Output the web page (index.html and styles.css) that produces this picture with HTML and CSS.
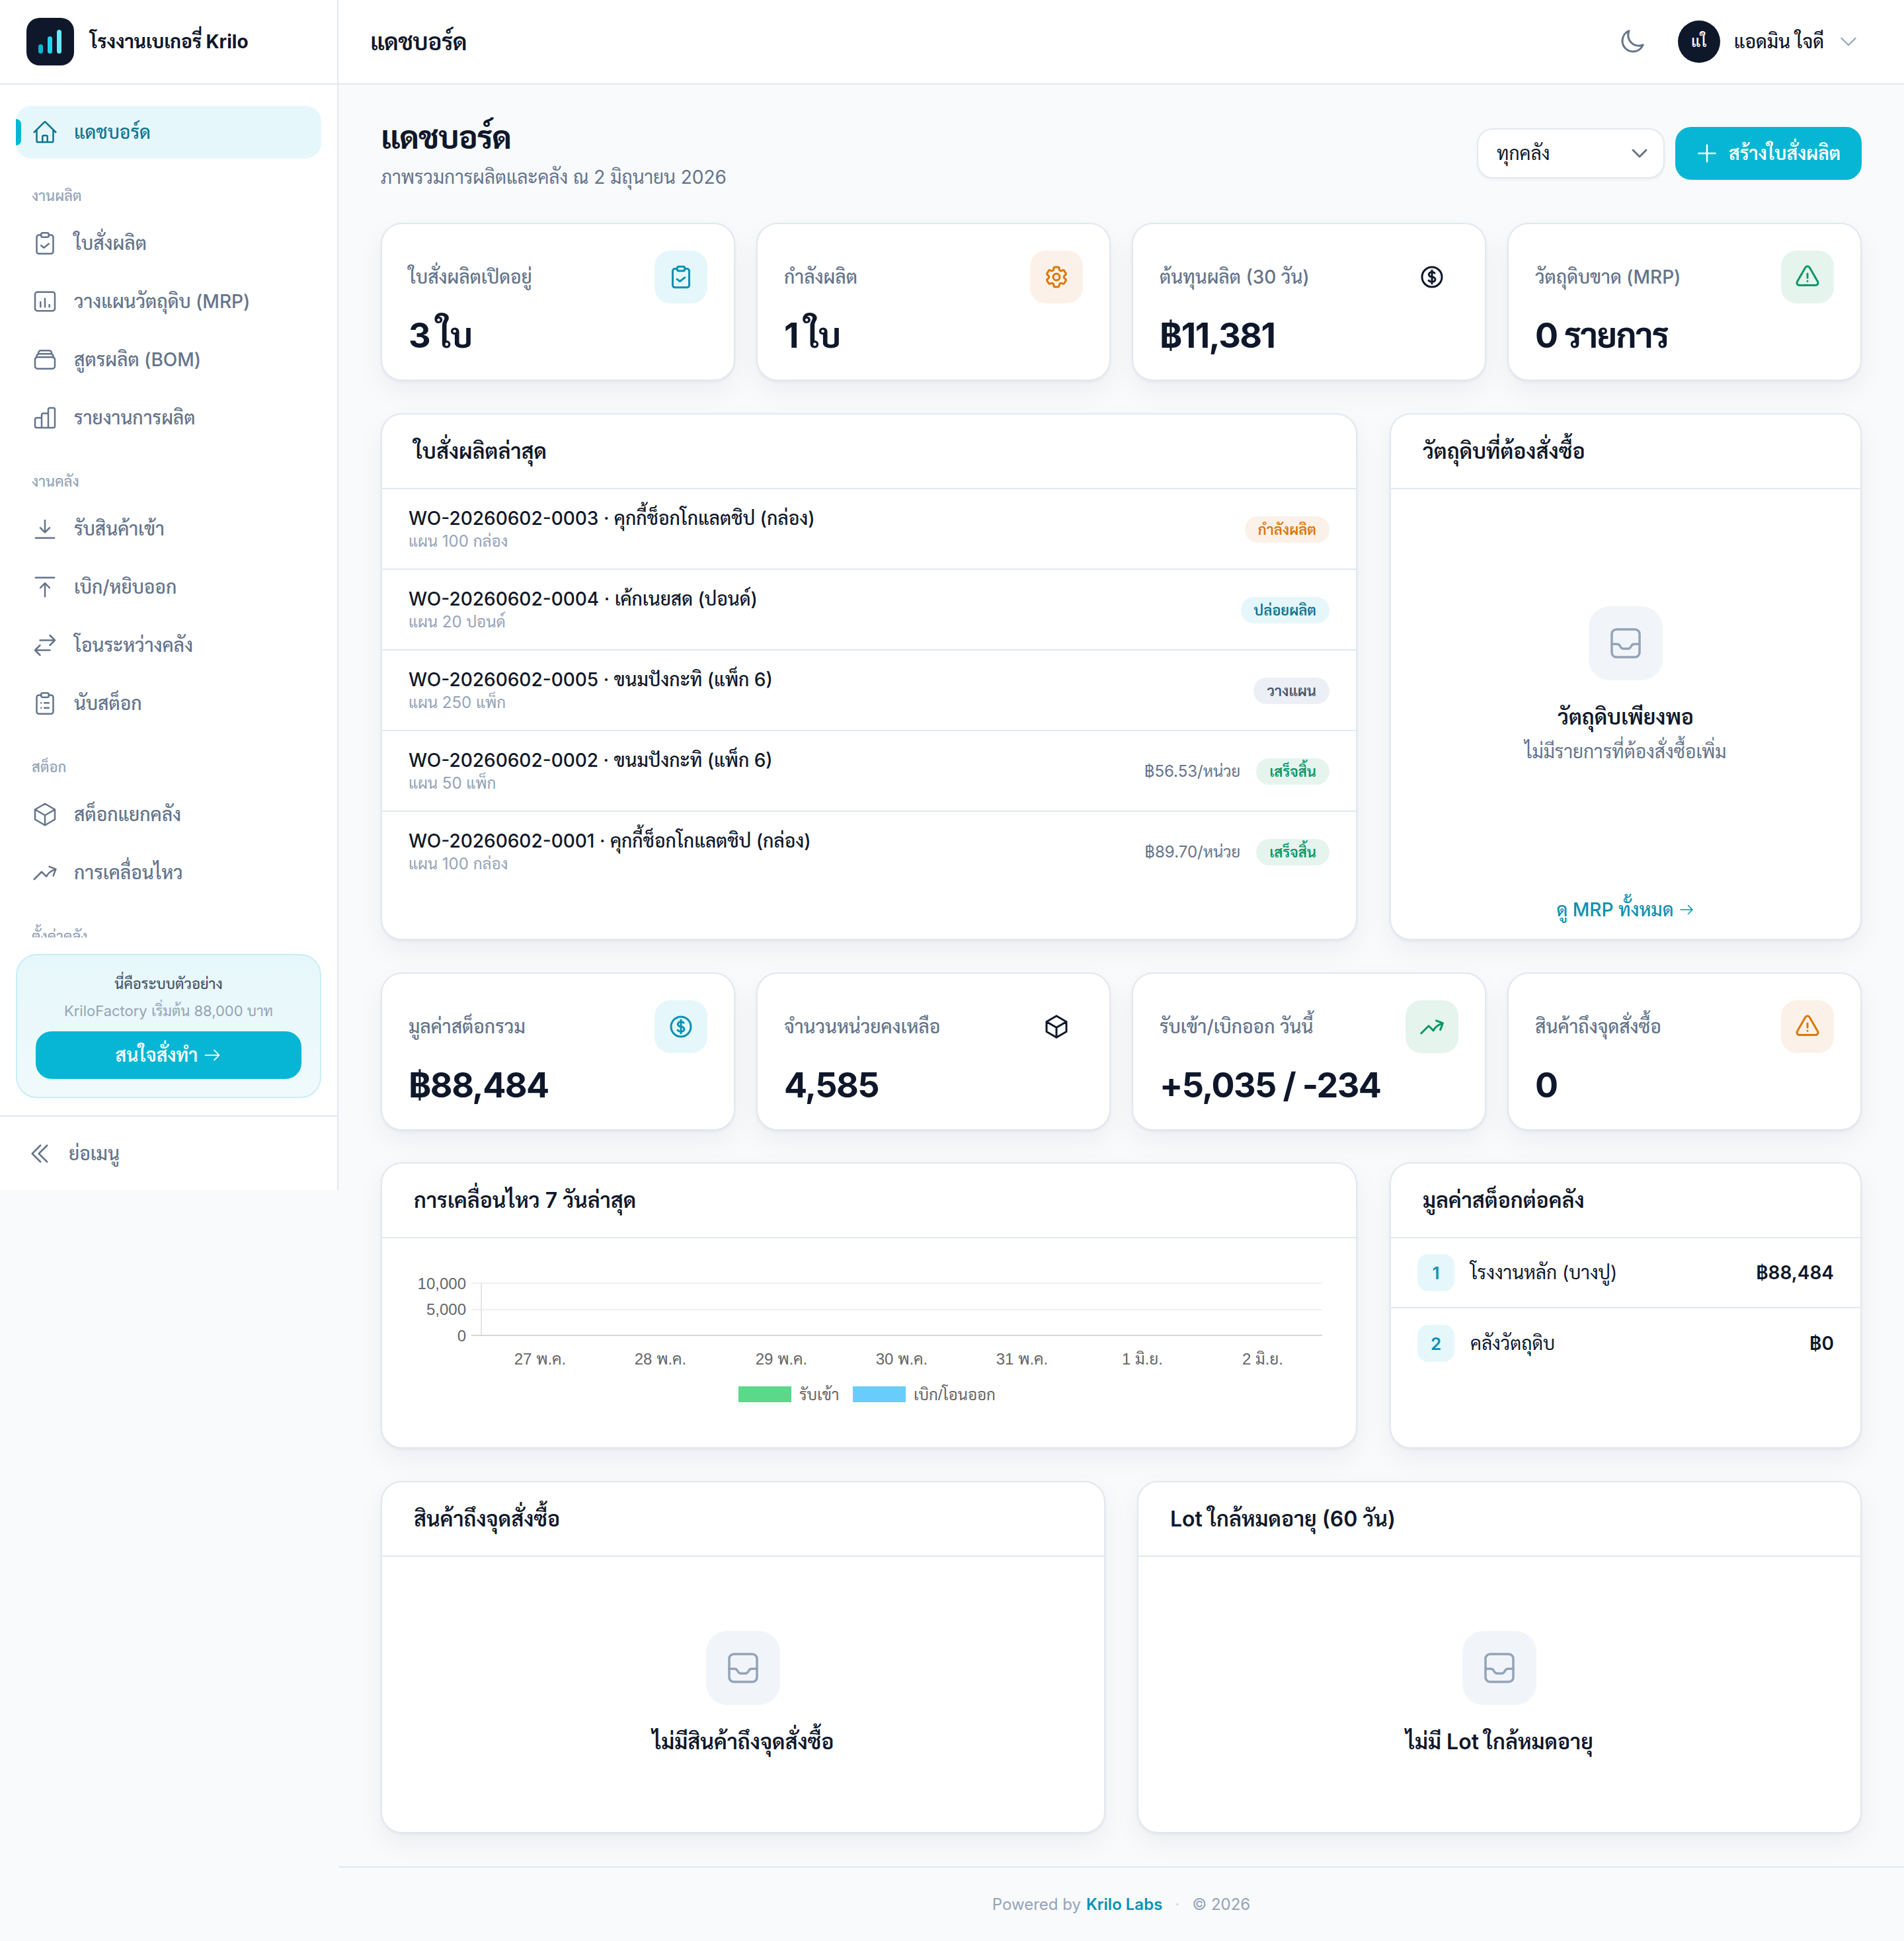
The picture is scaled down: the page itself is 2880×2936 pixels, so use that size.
FILE: index.html
```html
<!DOCTYPE html>
<html lang="th">
<head>
<meta charset="utf-8">
<title>แดชบอร์ด</title>
<link rel="stylesheet" href="styles.css">
</head>
<body>

<svg class="sprite" width="0" height="0">
	<symbol id="i-home" viewBox="0 0 24 24"><path d="m2.25 12 8.954-8.955c.44-.439 1.152-.439 1.591 0L21.75 12M4.5 9.75v10.125c0 .621.504 1.125 1.125 1.125H9.75v-4.875c0-.621.504-1.125 1.125-1.125h2.25c.621 0 1.125.504 1.125 1.125V21h4.125c.621 0 1.125-.504 1.125-1.125V9.75M8.25 21h8.25"/></symbol>
	<symbol id="i-check" viewBox="0 0 24 24"><rect x="8.5" y="2.5" width="7" height="4" rx="1.5"/><path d="M15.5 4.5h2A2 2 0 0 1 19.5 6.500v13a2 2 0 0 1-2 2h-11a2 2 0 0 1-2-2v-13a2 2 0 0 1 2-2h2"/><path d="m8.500 14 2.500 2 4.500-3.500"/></symbol>
	<symbol id="i-mrp" viewBox="0 0 24 24"><rect x="3" y="3.500" width="18" height="17" rx="2"/><path d="M8 12.500v4.500M12 9.500v7.500M16 15v2"/></symbol>
	<symbol id="i-stack" viewBox="0 0 24 24"><path d="M6 6.878V6a2.25 2.25 0 0 1 2.25-2.25h7.5A2.25 2.25 0 0 1 18 6v.878m-12 0c.235-.083.487-.128.75-.128h10.5c.263 0 .515.045.75.128m-12 0A2.25 2.25 0 0 0 4.500 9v.878m13.5-3A2.25 2.25 0 0 1 19.500 9v.878m0 0a2.246 2.246 0 0 0-.75-.128H5.250c-.263 0-.515.045-.75.128m15 0A2.25 2.25 0 0 1 21 12v6a2.25 2.25 0 0 1-2.25 2.25H5.250A2.25 2.25 0 0 1 3 18v-6c0-.98.626-1.813 1.500-2.122"/></symbol>
	<symbol id="i-bars" viewBox="0 0 24 24"><path d="M3 13.500A1.500 1.500 0 0 1 4.500 12H9v9H4.500A1.500 1.500 0 0 1 3 19.500ZM9 21V9.500A1.500 1.500 0 0 1 10.500 8H15v13ZM15 21V4.500A1.500 1.500 0 0 1 16.500 3h3A1.500 1.500 0 0 1 21 4.500v15a1.500 1.500 0 0 1-1.500 1.500Z"/></symbol>
	<symbol id="i-in" viewBox="0 0 24 24"><path d="M12 4.200v11M7.800 11 12 15.200 16.200 11M3.500 20.300h17"/></symbol>
	<symbol id="i-out" viewBox="0 0 24 24"><path d="M3.500 3.500h17M12 20.500v-12M7.800 12.700 12 8.500l4.200 4.200"/></symbol>
	<symbol id="i-swap" viewBox="0 0 24 24"><path d="M7.500 21 3 16.500m0 0L7.500 12M3 16.500h13.500m0-13.500L21 7.500m0 0L16.500 12M21 7.500H7.500"/></symbol>
	<symbol id="i-list" viewBox="0 0 24 24"><rect x="8.500" y="2.500" width="7" height="4" rx="1.500"/><path d="M15.500 4.500h2a2 2 0 0 1 2 2v13a2 2 0 0 1-2 2h-11a2 2 0 0 1-2-2v-13a2 2 0 0 1 2-2h2"/><path d="M11.500 11.500h4M11.500 16h4M8.500 11.500h.01M8.500 16h.01"/></symbol>
	<symbol id="i-cube" viewBox="0 0 24 24"><path d="m21 7.500-9-5.250L3 7.500m18 0-9 5.250m9-5.250v9l-9 5.250M3 7.500l9 5.250M3 7.500v9l9 5.250m0-9v9"/></symbol>
	<symbol id="i-trend" viewBox="0 0 24 24"><path d="M2.250 18 9 11.250l4.306 4.306a11.950 11.950 0 0 1 5.814-5.518l2.740-1.220m0 0-5.940-2.281m5.940 2.280-2.280 5.941"/></symbol>
	<symbol id="i-double" viewBox="0 0 24 24"><path d="m18.750 4.500-7.500 7.500 7.500 7.500m-6-15L5.250 12l7.500 7.500"/></symbol>
	<symbol id="i-moon" viewBox="0 0 24 24"><path d="M21.752 15.002A9.720 9.720 0 0 1 18 15.750c-5.385 0-9.750-4.365-9.750-9.750 0-1.330.266-2.597.748-3.752A9.753 9.753 0 0 0 3 11.250C3 16.635 7.365 21 12.750 21a9.753 9.753 0 0 0 9.002-5.998Z"/></symbol>
	<symbol id="i-chevron" viewBox="0 0 24 24"><path d="m19.500 8.250-7.500 7.500-7.500-7.500"/></symbol>
	<symbol id="i-plus" viewBox="0 0 24 24"><path d="M12 4.500v15m7.500-7.500h-15"/></symbol>
	<symbol id="i-cog" viewBox="0 0 24 24"><path d="M9.594 3.940c.09-.542.56-.94 1.110-.94h2.593c.55 0 1.020.398 1.110.94l.213 1.281c.063.374.313.686.645.870.074.04.147.083.22.127.325.196.72.257 1.075.124l1.217-.456a1.125 1.125 0 0 1 1.370.49l1.296 2.247a1.125 1.125 0 0 1-.26 1.431l-1.003.827c-.293.241-.438.613-.43.992a7.723 7.723 0 0 1 0 .255c-.008.378.137.75.43.991l1.004.827c.424.35.534.955.26 1.430l-1.298 2.247a1.125 1.125 0 0 1-1.369.491l-1.217-.456c-.355-.133-.75-.072-1.076.124a6.470 6.470 0 0 1-.22.128c-.331.183-.581.495-.644.869l-.213 1.281c-.09.543-.56.94-1.110.94h-2.594c-.55 0-1.019-.398-1.110-.94l-.213-1.281c-.062-.374-.312-.686-.644-.87a6.520 6.520 0 0 1-.22-.127c-.325-.196-.72-.257-1.076-.124l-1.217.456a1.125 1.125 0 0 1-1.369-.49l-1.297-2.247a1.125 1.125 0 0 1 .26-1.431l1.004-.827c.292-.24.437-.613.43-.991a6.932 6.932 0 0 1 0-.255c.007-.38-.138-.751-.43-.992l-1.004-.827a1.125 1.125 0 0 1-.26-1.430l1.297-2.247a1.125 1.125 0 0 1 1.370-.491l1.216.456c.356.133.751.072 1.076-.124.072-.044.146-.086.22-.128.332-.183.582-.495.644-.869l.214-1.280Z"/><path d="M15 12a3 3 0 1 1-6 0 3 3 0 0 1 6 0Z"/></symbol>
	<symbol id="i-dollar" viewBox="0 0 24 24"><path d="M12 6v12m-3-2.818.879.659c1.171.879 3.070.879 4.242 0 1.172-.879 1.172-2.303 0-3.182C13.536 12.219 12.768 12 12 12c-.725 0-1.450-.22-2.003-.659-1.106-.879-1.106-2.303 0-3.182s2.900-.879 4.006 0l.415.33M21 12a9 9 0 1 1-18 0 9 9 0 0 1 18 0Z"/></symbol>
	<symbol id="i-warn" viewBox="0 0 24 24"><path d="M12 9v3.750m-9.303 3.376c-.866 1.500.217 3.374 1.948 3.374h14.710c1.730 0 2.813-1.874 1.948-3.374L13.949 3.378c-.866-1.500-3.032-1.500-3.898 0L2.697 16.126ZM12 15.750h.007v.008H12v-.008Z"/></symbol>
	<symbol id="i-tray" viewBox="0 0 24 24"><rect x="3" y="3" width="18" height="18" rx="3"/><path d="M3 12.500h3.500c1 0 1.500.5 2 1.500s1 1.500 2 1.500h3c1 0 1.500-.5 2-1.500s1-1.500 2-1.500H21"/></symbol>
	<symbol id="i-arrow" viewBox="0 0 24 24"><path d="M3 12h18m-6.500-6.500L21 12l-6.500 6.500"/></symbol>
</svg>

<div class="app">
	<aside class="sidebar">
		<div class="brand">
			<div class="brand-logo">
				<svg width="72" height="72" viewBox="0 0 72 72">
					<rect x="18" y="40" width="7" height="14" rx="3.500" fill="#06b6d4"/>
					<rect x="32" y="28" width="7" height="26" rx="3.500" fill="#22d3ee"/>
					<rect x="46" y="18" width="7" height="36" rx="3.500" fill="#67e8f9"/>
				</svg>
			</div>
			<span class="brand-name">โรงงานเบเกอรี่ Krilo</span>
		</div>

		<nav class="nav">
			<a class="nav-item active"><svg class="icon"><use href="#i-home"/></svg>แดชบอร์ด</a>

			<div class="nav-label">งานผลิต</div>
			<a class="nav-item"><svg class="icon"><use href="#i-check"/></svg>ใบสั่งผลิต</a>
			<a class="nav-item"><svg class="icon"><use href="#i-mrp"/></svg>วางแผนวัตถุดิบ (MRP)</a>
			<a class="nav-item"><svg class="icon"><use href="#i-stack"/></svg>สูตรผลิต (BOM)</a>
			<a class="nav-item"><svg class="icon"><use href="#i-bars"/></svg>รายงานการผลิต</a>

			<div class="nav-label">งานคลัง</div>
			<a class="nav-item"><svg class="icon"><use href="#i-in"/></svg>รับสินค้าเข้า</a>
			<a class="nav-item"><svg class="icon"><use href="#i-out"/></svg>เบิก/หยิบออก</a>
			<a class="nav-item"><svg class="icon"><use href="#i-swap"/></svg>โอนระหว่างคลัง</a>
			<a class="nav-item"><svg class="icon"><use href="#i-list"/></svg>นับสต็อก</a>

			<div class="nav-label">สต็อก</div>
			<a class="nav-item"><svg class="icon"><use href="#i-cube"/></svg>สต็อกแยกคลัง</a>
			<a class="nav-item"><svg class="icon"><use href="#i-trend"/></svg>การเคลื่อนไหว</a>

			<div class="nav-label">ตั้งค่าคลัง</div>
		</nav>

		<div class="promo">
			<div class="promo-title">นี่คือระบบตัวอย่าง</div>
			<div class="promo-sub">KriloFactory เริ่มต้น 88,000 บาท</div>
			<a class="promo-btn">สนใจสั่งทำ <svg class="icon-sm"><use href="#i-arrow"/></svg></a>
		</div>

		<a class="collapse"><svg class="icon"><use href="#i-double"/></svg>ย่อเมนู</a>
	</aside>

	<div class="main">
		<header class="topbar">
			<div class="topbar-title">แดชบอร์ด</div>
			<svg class="icon moon"><use href="#i-moon"/></svg>
			<div class="avatar">แใ</div>
			<div class="user-name">แอดมิน ใจดี</div>
			<svg class="user-chevron"><use href="#i-chevron"/></svg>
		</header>

		<main class="content">
			<div class="page-head">
				<div>
					<h1>แดชบอร์ด</h1>
					<p>ภาพรวมการผลิตและคลัง ณ 2 มิถุนายน 2026</p>
				</div>
				<div class="page-actions">
					<div class="select">ทุกคลัง<svg><use href="#i-chevron"/></svg></div>
					<a class="btn-primary"><svg class="icon"><use href="#i-plus"/></svg>สร้างใบสั่งผลิต</a>
				</div>
			</div>

			<section class="stats">
				<div class="stat">
					<div class="stat-top"><span>ใบสั่งผลิตเปิดอยู่</span><div class="chip cyan"><svg class="icon"><use href="#i-check"/></svg></div></div>
					<div class="stat-value">3 ใบ</div>
				</div>
				<div class="stat">
					<div class="stat-top"><span>กำลังผลิต</span><div class="chip orange"><svg class="icon"><use href="#i-cog"/></svg></div></div>
					<div class="stat-value">1 ใบ</div>
				</div>
				<div class="stat">
					<div class="stat-top"><span>ต้นทุนผลิต (30 วัน)</span><div class="chip plain"><svg class="icon"><use href="#i-dollar"/></svg></div></div>
					<div class="stat-value">฿11,381</div>
				</div>
				<div class="stat">
					<div class="stat-top"><span>วัตถุดิบขาด (MRP)</span><div class="chip green"><svg class="icon"><use href="#i-warn"/></svg></div></div>
					<div class="stat-value">0 รายการ</div>
				</div>
			</section>

			<section class="row-8-4 row-orders">
				<div class="panel">
					<div class="panel-head">ใบสั่งผลิตล่าสุด</div>
					<div class="order">
						<div class="order-text"><div class="order-title">WO-20260602-0003 · คุกกี้ช็อกโกแลตชิป (กล่อง)</div><div class="order-sub">แผน 100 กล่อง</div></div>
						<span class="badge b-orange">กำลังผลิต</span>
					</div>
					<div class="order">
						<div class="order-text"><div class="order-title">WO-20260602-0004 · เค้กเนยสด (ปอนด์)</div><div class="order-sub">แผน 20 ปอนด์</div></div>
						<span class="badge b-cyan">ปล่อยผลิต</span>
					</div>
					<div class="order">
						<div class="order-text"><div class="order-title">WO-20260602-0005 · ขนมปังกะทิ (แพ็ก 6)</div><div class="order-sub">แผน 250 แพ็ก</div></div>
						<span class="badge b-gray">วางแผน</span>
					</div>
					<div class="order">
						<div class="order-text"><div class="order-title">WO-20260602-0002 · ขนมปังกะทิ (แพ็ก 6)</div><div class="order-sub">แผน 50 แพ็ก</div></div>
						<span class="order-cost">฿56.53/หน่วย</span>
						<span class="badge b-green">เสร็จสิ้น</span>
					</div>
					<div class="order">
						<div class="order-text"><div class="order-title">WO-20260602-0001 · คุกกี้ช็อกโกแลตชิป (กล่อง)</div><div class="order-sub">แผน 100 กล่อง</div></div>
						<span class="order-cost">฿89.70/หน่วย</span>
						<span class="badge b-green">เสร็จสิ้น</span>
					</div>
				</div>

				<div class="panel">
					<div class="panel-head">วัตถุดิบที่ต้องสั่งซื้อ</div>
					<div class="empty empty-mrp">
						<div class="empty-icon"><svg><use href="#i-tray"/></svg></div>
						<div class="empty-title">วัตถุดิบเพียงพอ</div>
						<div class="empty-sub">ไม่มีรายการที่ต้องสั่งซื้อเพิ่ม</div>
					</div>
					<a class="panel-link">ดู MRP ทั้งหมด <svg class="icon-sm"><use href="#i-arrow"/></svg></a>
				</div>
			</section>

			<section class="stats stats-low">
				<div class="stat">
					<div class="stat-top"><span>มูลค่าสต็อกรวม</span><div class="chip cyan"><svg class="icon"><use href="#i-dollar"/></svg></div></div>
					<div class="stat-value">฿88,484</div>
				</div>
				<div class="stat">
					<div class="stat-top"><span>จำนวนหน่วยคงเหลือ</span><div class="chip plain"><svg class="icon"><use href="#i-cube"/></svg></div></div>
					<div class="stat-value">4,585</div>
				</div>
				<div class="stat">
					<div class="stat-top"><span>รับเข้า/เบิกออก วันนี้</span><div class="chip green"><svg class="icon"><use href="#i-trend"/></svg></div></div>
					<div class="stat-value">+5,035 / -234</div>
				</div>
				<div class="stat">
					<div class="stat-top"><span>สินค้าถึงจุดสั่งซื้อ</span><div class="chip orange"><svg class="icon"><use href="#i-warn"/></svg></div></div>
					<div class="stat-value">0</div>
				</div>
			</section>

			<section class="row-8-4 row-chart">
				<div class="panel">
					<div class="panel-head">การเคลื่อนไหว 7 วันล่าสุด</div>
					<svg class="chart" viewBox="0 0 1473 313" width="1473" height="313">
						<g class="chart-grid">
							<path d="M135 68H1422M135 108H1422"/>
							<path class="axis-y" d="M150 68V147"/>
							<path class="axis-x" d="M135 147H1422"/>
						</g>
						<g class="chart-y">
							<text x="127" y="68">10,000</text>
							<text x="127" y="107">5,000</text>
							<text x="127" y="147">0</text>
						</g>
						<g class="chart-x">
							<text x="239" y="182">27 พ.ค.</text>
							<text x="421" y="182">28 พ.ค.</text>
							<text x="604" y="182">29 พ.ค.</text>
							<text x="786" y="182">30 พ.ค.</text>
							<text x="968" y="182">31 พ.ค.</text>
							<text x="1150" y="182">1 มิ.ย.</text>
							<text x="1332" y="182">2 มิ.ย.</text>
						</g>
						<rect x="539" y="224" width="80" height="24" fill="#5bd88a"/>
						<rect x="712" y="224" width="80" height="24" fill="#69cdfb"/>
						<g class="chart-legend">
							<text x="631" y="236">รับเข้า</text>
							<text x="804" y="236">เบิก/โอนออก</text>
						</g>
					</svg>
				</div>

				<div class="panel">
					<div class="panel-head">มูลค่าสต็อกต่อคลัง</div>
					<div class="wh">
						<span class="wh-num">1</span><span class="wh-name">โรงงานหลัก (บางปู)</span><span class="wh-value">฿88,484</span>
					</div>
					<div class="wh">
						<span class="wh-num">2</span><span class="wh-name">คลังวัตถุดิบ</span><span class="wh-value">฿0</span>
					</div>
				</div>
			</section>

			<section class="row-6-6">
				<div class="panel">
					<div class="panel-head">สินค้าถึงจุดสั่งซื้อ</div>
					<div class="empty">
						<div class="empty-icon"><svg><use href="#i-tray"/></svg></div>
						<div class="empty-title">ไม่มีสินค้าถึงจุดสั่งซื้อ</div>
					</div>
				</div>
				<div class="panel">
					<div class="panel-head">Lot ใกล้หมดอายุ (60 วัน)</div>
					<div class="empty">
						<div class="empty-icon"><svg><use href="#i-tray"/></svg></div>
						<div class="empty-title">ไม่มี Lot ใกล้หมดอายุ</div>
					</div>
				</div>
			</section>
		</main>

		<footer class="footer">Powered by <a>Krilo Labs</a> <span class="dot">·</span> © 2026</footer>
	</div>
</div>

</body>
</html>
```

FILE: styles.css
```css
* {
	box-sizing: border-box;
}
html, body {
	margin: 0;
	padding: 0;
}
body {
	background: #f8fafc;
	color: #0f172a;
	font-family: Inter, Sarabun, sans-serif;
	font-size: 28px;
	line-height: 1.5;
}
.sprite {
	position: absolute;
}
svg {
	fill: none;
	stroke: currentColor;
	stroke-width: 1.5;
	stroke-linecap: round;
	stroke-linejoin: round;
	flex: none;
}
.icon {
	width: 40px;
	height: 40px;
}
.icon-sm {
	width: 28px;
	height: 28px;
}
.app {
	display: flex;
	align-items: flex-start;
}

/* sidebar */
.sidebar {
	width: 512px;
	height: 1800px;
	flex: none;
	display: flex;
	flex-direction: column;
	background: #fff;
	border-right: 2px solid #e2e8f0;
}
.brand {
	height: 128px;
	flex: none;
	display: flex;
	align-items: center;
	gap: 24px;
	padding-left: 40px;
	border-bottom: 2px solid #e2e8f0;
}
.brand-logo {
	width: 72px;
	height: 72px;
	background: #0f172a;
	border-radius: 20px;
}
.brand-logo svg {
	stroke: none;
	display: block;
}
.brand-name {
	font-size: 28px;
	font-weight: 700;
}
.nav {
	height: 1290px;
	flex: none;
	overflow: hidden;
	padding: 32px 24px 0;
}
.nav-item {
	display: flex;
	align-items: center;
	gap: 24px;
	height: 80px;
	padding-left: 24px;
	margin-bottom: 8px;
	color: #64748b;
	font-size: 28px;
	font-weight: 500;
	border-radius: 24px;
}
.nav-item.active {
	position: relative;
	background: #e6f7fb;
	color: #0e7490;
	font-weight: 500;
}
.nav-item.active::before {
	content: "";
	position: absolute;
	left: 0;
	top: 20px;
	width: 8px;
	height: 40px;
	background: #06b6d4;
	border-radius: 0 8px 8px 0;
}
.nav-label {
	height: 32px;
	line-height: 32px;
	margin: 40px 0 16px 24px;
	color: #94a3b8;
	font-size: 22px;
	font-weight: 500;
}
.promo {
	margin: 25px 24px 0;
	height: 218px;
	flex: none;
	padding: 22px 28px 0;
	text-align: center;
	background: linear-gradient(180deg, #e6f7fb, #f0fafc);
	border: 2px solid #c8eef5;
	border-radius: 32px;
}
.promo-title {
	color: #475569;
	font-size: 22px;
	font-weight: 500;
	line-height: 42px;
}
.promo-sub {
	color: #94a3b8;
	font-size: 22px;
	line-height: 40px;
}
.promo-btn {
	display: flex;
	align-items: center;
	justify-content: center;
	gap: 8px;
	height: 72px;
	margin-top: 11px;
	background: #06b6d4;
	color: #fff;
	font-weight: 600;
	border-radius: 24px;
}
.collapse {
	flex: 1;
	display: flex;
	align-items: center;
	gap: 24px;
	margin-top: 26px;
	padding-left: 40px;
	border-top: 2px solid #e2e8f0;
	color: #64748b;
	font-weight: 500;
}

/* main */
.main {
	flex: 1;
	min-width: 0;
}
.topbar {
	height: 128px;
	display: flex;
	align-items: center;
	padding: 0 67px 0 48px;
	background: #fff;
	border-bottom: 2px solid #e2e8f0;
}
.topbar-title {
	flex: 1;
	font-size: 36px;
	font-weight: 600;
	letter-spacing: -.02em;
}
.moon {
	color: #64748b;
	margin-right: 49px;
	stroke-width: 1.800;
}
.avatar {
	width: 64px;
	height: 64px;
	display: flex;
	align-items: center;
	justify-content: center;
	margin-right: 21px;
	background: #0f172a;
	color: #fff;
	font-size: 24px;
	font-weight: 500;
	border-radius: 50%;
}
.user-name {
	font-weight: 500;
	margin-right: 20px;
}
.user-chevron {
	width: 34px;
	height: 34px;
	color: #94a3b8;
}
.content {
	padding: 44px 64px 50px;
}
.page-head {
	display: flex;
	align-items: center;
	justify-content: space-between;
	margin-bottom: 47px;
}
h1 {
	margin: 0;
	font-size: 48px;
	font-weight: 700;
	line-height: 72px;
	letter-spacing: -.02em;
}
.page-head p {
	margin: 2px 0 0;
	color: #64748b;
	font-size: 28px;
	line-height: 44px;
}
.page-actions {
	display: flex;
	align-items: center;
	gap: 16px;
	margin-top: 2px;
}
.select {
	width: 284px;
	height: 76px;
	display: flex;
	align-items: center;
	justify-content: space-between;
	padding: 0 20px 0 28px;
	background: #fff;
	border: 2px solid #e2e8f0;
	border-radius: 24px;
	box-shadow: 0 2px 4px rgba(15, 23, 42, .05);
}
.select svg {
	width: 32px;
	height: 32px;
	color: #6b7280;
	stroke-width: 2.200;
}
.btn-primary {
	width: 282px;
	height: 80px;
	display: flex;
	align-items: center;
	gap: 13px;
	padding-left: 28px;
	background: #06b6d4;
	color: #fff;
	font-weight: 600;
	border-radius: 24px;
}

/* stat cards */
.stats {
	display: grid;
	grid-template-columns: repeat(4, 1fr);
	gap: 32px;
	margin-bottom: 49px;
}
.stats-low {
	margin-bottom: 48px;
}
.stat, .panel {
	background: #fff;
	border: 2px solid #e2e8f0;
	border-radius: 32px;
	box-shadow: 0 2px 4px rgba(15, 23, 42, .05), 0 16px 40px rgba(15, 23, 42, .05);
}
.stat {
	height: 239px;
	padding: 40px 40px 0;
}
.stat-top {
	display: flex;
	align-items: center;
	justify-content: space-between;
	color: #64748b;
	font-weight: 500;
}
.stat-value {
	margin-top: 13px;
	font-size: 52px;
	font-weight: 700;
	line-height: 72px;
	letter-spacing: -.03em;
}
.chip {
	width: 80px;
	height: 80px;
	display: flex;
	align-items: center;
	justify-content: center;
	border-radius: 24px;
}
.chip .icon {
	stroke-width: 1.800;
}
.cyan {
	background: #e6f7fb;
	color: #0891b2;
}
.orange {
	background: #fcf1e8;
	color: #d97706;
}
.green {
	background: #e6f4ee;
	color: #059669;
}
.plain {
	color: #0f172a;
}

/* panels */
.row-8-4 {
	display: grid;
	grid-template-columns: 1477px 1fr;
	gap: 49px;
	margin-bottom: 49px;
}
.row-orders {
	height: 797px;
}
.row-chart {
	height: 433px;
}
.row-6-6 {
	display: grid;
	grid-template-columns: 1fr 1fr;
	gap: 48px;
	height: 533px;
}
.panel {
	display: flex;
	flex-direction: column;
	overflow: hidden;
}
.panel-head {
	height: 113px;
	flex: none;
	display: flex;
	align-items: center;
	padding-left: 48px;
	border-bottom: 2px solid #e2e8f0;
	font-size: 32px;
	font-weight: 600;
}
.order {
	display: flex;
	align-items: center;
	gap: 24px;
	padding: 26px 40px 24px;
	border-bottom: 2px solid #e2e8f0;
}
.order:last-child {
	border-bottom: 0;
}
.order-text {
	flex: 1;
}
.order-title {
	font-weight: 500;
	line-height: 36px;
}
.order-sub {
	color: #94a3b8;
	font-size: 24px;
	line-height: 34px;
}
.order-cost {
	color: #64748b;
	font-size: 24px;
}
.badge {
	height: 40px;
	display: flex;
	align-items: center;
	padding: 0 20px;
	font-size: 22px;
	font-weight: 600;
	border-radius: 20px;
}
.b-orange {
	background: #fcf1e8;
	color: #d97706;
}
.b-cyan {
	background: #e6f7fb;
	color: #0e7490;
}
.b-gray {
	background: #eceff5;
	color: #475569;
}
.b-green {
	background: #e6f4ee;
	color: #059669;
}
.empty {
	flex: 1;
	display: flex;
	flex-direction: column;
	align-items: center;
	justify-content: center;
}
.empty-mrp {
	padding-top: 4px;
}
.empty-icon {
	width: 112px;
	height: 112px;
	display: flex;
	align-items: center;
	justify-content: center;
	margin-bottom: 32px;
	background: #f1f5f9;
	color: #94a3b8;
	border-radius: 32px;
}
.empty-icon svg {
	width: 56px;
	height: 56px;
}
.empty-title {
	font-size: 32px;
	font-weight: 600;
	line-height: 48px;
}
.empty-sub {
	color: #64748b;
	line-height: 44px;
	margin-top: 6px;
}
.panel-link {
	height: 88px;
	flex: none;
	display: flex;
	align-items: center;
	justify-content: center;
	gap: 8px;
	color: #0891b2;
	font-weight: 500;
}
.panel-link .icon-sm {
	width: 24px;
	height: 24px;
}

/* chart */
.chart {
	stroke: none;
	display: block;
}
.chart-grid path {
	stroke: #eef0f4;
	stroke-width: 2;
	stroke-linecap: butt;
}
.chart-grid .axis-y {
	stroke: #e4e4e7;
}
.chart-grid .axis-x {
	stroke: #d6d6d9;
}
.chart text {
	fill: #666;
	font-family: "Liberation Sans", Sarabun, sans-serif;
	font-size: 24px;
	dominant-baseline: central;
}
.chart-y text {
	text-anchor: end;
}
.chart-x text {
	text-anchor: middle;
}

/* warehouses */
.wh {
	height: 106px;
	flex: none;
	display: flex;
	align-items: center;
	gap: 24px;
	padding: 0 40px;
	border-bottom: 2px solid #e2e8f0;
}
.wh:last-child {
	border-bottom: 0;
}
.wh-num {
	width: 56px;
	height: 56px;
	display: flex;
	align-items: center;
	justify-content: center;
	background: #e6f7fb;
	color: #0891b2;
	font-size: 26px;
	font-weight: 600;
	border-radius: 16px;
}
.wh-name {
	flex: 1;
}
.wh-value {
	font-weight: 600;
}

/* footer */
.footer {
	height: 113px;
	display: flex;
	align-items: center;
	justify-content: center;
	gap: 8px;
	border-top: 2px solid #e2e8f0;
	color: #94a3b8;
	font-size: 24px;
}
.footer a {
	color: #0891b2;
	font-weight: 600;
}
.dot {
	margin: 0 11px;
	color: #cbd5e1;
}
```
